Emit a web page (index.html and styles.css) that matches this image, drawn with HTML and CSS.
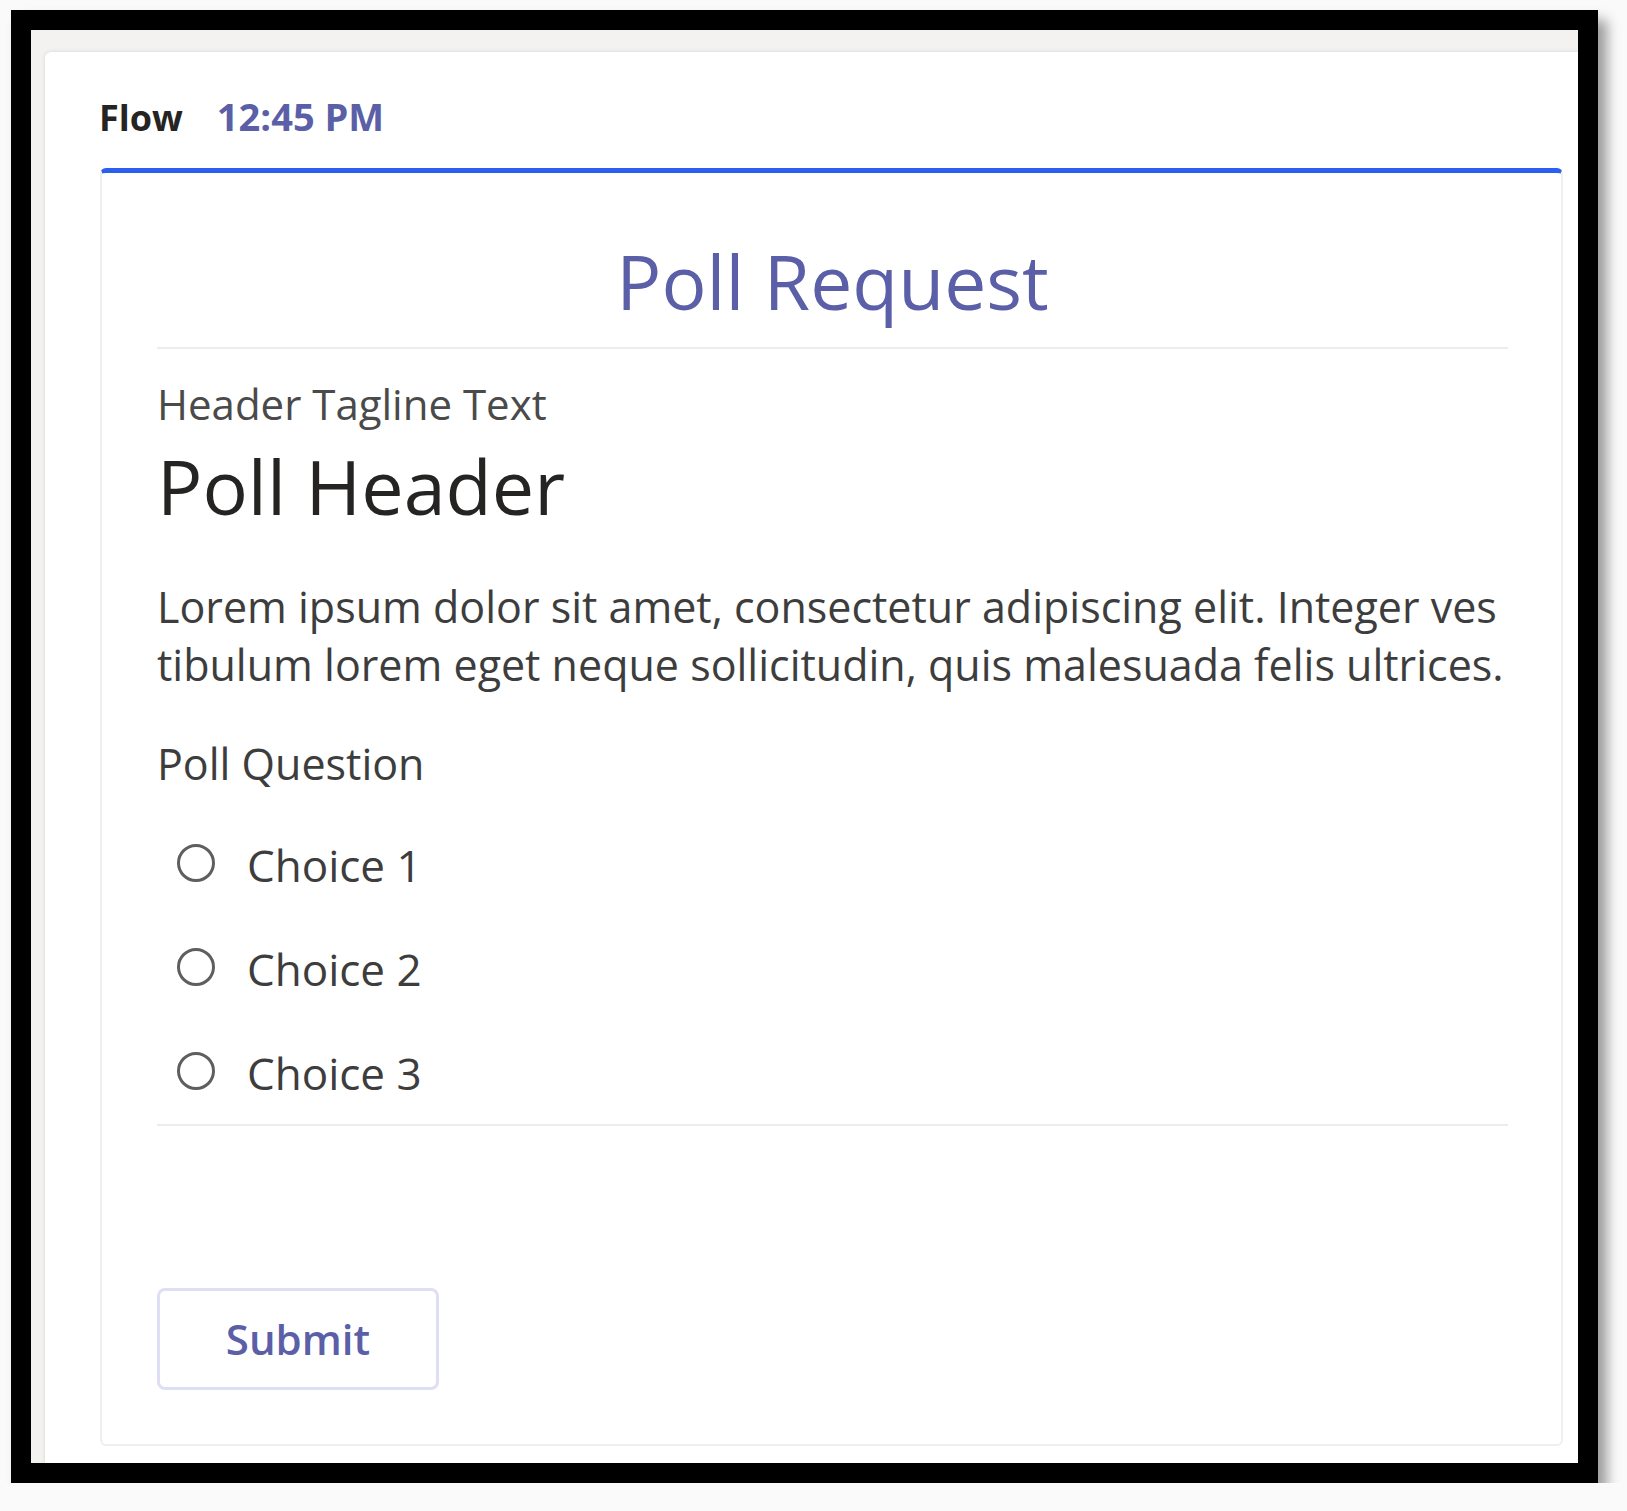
FILE: index.html
```html
<!DOCTYPE html>
<html lang="en">
<head>
<meta charset="utf-8">
<title>Poll Request</title>
<link rel="stylesheet" href="styles.css">
</head>
<body>
<div class="frame">
  <div class="panel">
    <div class="meta">
      <span class="sender">Flow</span>
      <span class="time">12:45 PM</span>
    </div>
    <div class="card">
      <div class="title">Poll Request</div>
      <div class="rule"></div>
      <div class="tagline">Header Tagline Text</div>
      <div class="header">Poll Header</div>
      <p class="body-text">Lorem ipsum dolor sit amet, consectetur adipiscing elit. Integer ves<br>tibulum lorem eget neque sollicitudin, quis malesuada felis ultrices.</p>
      <div class="question">Poll Question</div>
      <div class="choices">
        <label class="choice"><span class="radio"></span><span class="choice-label">Choice 1</span></label>
        <label class="choice"><span class="radio"></span><span class="choice-label">Choice 2</span></label>
        <label class="choice"><span class="radio"></span><span class="choice-label">Choice 3</span></label>
      </div>
      <div class="rule rule-bottom"></div>
      <button class="submit" type="button">Submit</button>
    </div>
  </div>
</div>
</body>
</html>
```

FILE: styles.css
```css
html, body {
  margin: 0;
  padding: 0;
  background: #fafafa;
}

body {
  font-family: "Open Sans", "Noto Sans", sans-serif;
  color: #424242;
}

.frame {
  margin: 10px 0 0 11px;
  width: 1587px;
  height: 1473px;
  box-sizing: border-box;
  border: 20px solid #000;
  background: #f3f2f1;
  padding: 22px 0 0 14px;
  overflow: hidden;
  box-shadow: 9px 10px 12px rgba(0, 0, 0, 0.38);
}

.panel {
  width: 1533px;
  height: 1440px;
  background: #fff;
  border-radius: 6px 0 0 0;
  box-shadow: 0 0 4px rgba(0, 0, 0, 0.12);
  padding-top: 39px;
  box-sizing: border-box;
}

.meta {
  display: flex;
  align-items: baseline;
  gap: 34px;
  padding-left: 54px;
  height: 50px;
  line-height: 50px;
  font-size: 36px;
}

.sender {
  font-weight: 700;
  color: #252423;
}

.time {
  font-size: 38px;
  font-weight: 700;
  color: #5b5fa7;
}

.card {
  margin: 27px 0 0 55px;
  width: 1463px;
  height: 1278px;
  box-sizing: border-box;
  border: 2px solid #efefef;
  border-top: 5px solid #2a5ff0;
  border-radius: 6px;
  padding: 0 53px 0 55px;
}

.title {
  margin-top: 63px;
  height: 90px;
  line-height: 90px;
  font-size: 75px;
  color: #5b5fa7;
  text-align: center;
}

.rule {
  margin-top: 21px;
  height: 2px;
  background: #ececec;
}

.tagline {
  margin-top: 27px;
  line-height: 56px;
  font-size: 42px;
  color: #4a4a4a;
}

.header {
  margin-top: 9px;
  line-height: 90px;
  font-size: 75.5px;
  color: #252423;
}

.body-text {
  margin: 47px 0 0;
  line-height: 58px;
  font-size: 43px;
  color: #3d3d3d;
  white-space: nowrap;
}

.question {
  margin-top: 42px;
  line-height: 56px;
  font-size: 43px;
  color: #3d3d3d;
}

.choices {
  margin-top: 21px;
  display: flex;
  flex-direction: column;
}

.choice {
  display: flex;
  align-items: center;
  height: 104px;
  padding-left: 20px;
  gap: 32px;
}

.radio {
  width: 38px;
  height: 38px;
  box-sizing: border-box;
  border: 3px solid #5f5f5f;
  border-radius: 50%;
  margin-top: -4px;
  flex: none;
}

.choice-label {
  font-size: 44px;
  line-height: 104px;
  color: #3d3d3d;
}

.rule-bottom {
  margin-top: -1px;
}

.submit {
  display: block;
  margin-top: 162px;
  width: 282px;
  height: 102px;
  box-sizing: border-box;
  border: 3px solid #dedff5;
  border-radius: 8px;
  background: #fff;
  font-family: "Open Sans", "Noto Sans", sans-serif;
  font-size: 42px;
  font-weight: 600;
  color: #5b5fa7;
  padding: 0 0 2px;
}
```
